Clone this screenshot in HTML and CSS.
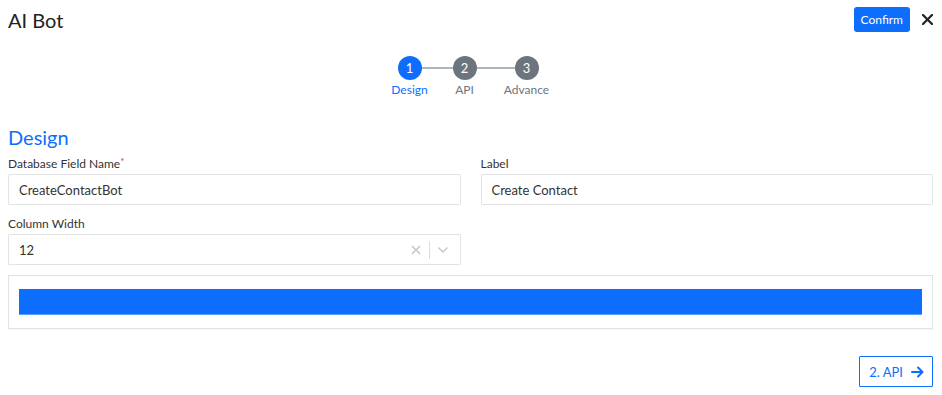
FILE: index.html
```html
<!DOCTYPE html>
<html lang="en">
<head>
<meta charset="UTF-8">
<meta name="viewport" content="width=device-width, initial-scale=1.0">
<title>AI Bot</title>
<link rel="stylesheet" href="styles.css">
</head>
<body>
<div class="modal">
  <!-- Header -->
  <div class="modal-header">
    <h2 class="modal-title">AI Bot</h2>
    <div class="header-actions">
      <button class="btn-confirm">Confirm</button>
      <button class="btn-close" aria-label="Close">
        <svg width="11" height="11" viewBox="0 0 11 11"><path d="M1 1L10 10M10 1L1 10" stroke="#222" stroke-width="2.2" stroke-linecap="round"/></svg>
      </button>
    </div>
  </div>

  <!-- Stepper -->
  <div class="stepper">
    <div class="step active">
      <div class="step-circle">1</div>
      <div class="step-label">Design</div>
    </div>
    <div class="step-line short"></div>
    <div class="step">
      <div class="step-circle">2</div>
      <div class="step-label">API</div>
    </div>
    <div class="step-line long"></div>
    <div class="step">
      <div class="step-circle">3</div>
      <div class="step-label">Advance</div>
    </div>
  </div>

  <!-- Design Section -->
  <h3 class="section-title">Design</h3>
  <div class="form-grid">
    <div class="field">
      <label class="field-label">Database Field Name<span class="required">*</span></label>
      <input class="text-input" type="text" value="CreateContactBot">
    </div>
    <div class="field">
      <label class="field-label">Label</label>
      <input class="text-input" type="text" value="Create Contact">
    </div>
    <div class="field">
      <label class="field-label">Column Width</label>
      <div class="select">
        <span class="select-value">12</span>
        <span class="select-clear">
          <svg width="10" height="10" viewBox="0 0 10 10"><path d="M1 1L9 9M9 1L1 9" stroke="#c4c4c4" stroke-width="1.5"/></svg>
        </span>
        <span class="select-sep"></span>
        <span class="select-arrow">
          <svg width="12" height="8" viewBox="0 0 12 8"><path d="M1.5 1.5L6 6L10.5 1.5" fill="none" stroke="#c4c4c4" stroke-width="1.3"/></svg>
        </span>
      </div>
    </div>
  </div>

  <div class="preview-box">
    <div class="preview-bar"></div>
  </div>

  <div class="modal-footer">
    <button class="btn-next">2. API
      <svg width="13" height="12" viewBox="0 0 13 12"><path d="M1 6H11M7 1.5L11.5 6L7 10.5" fill="none" stroke="#0d6efd" stroke-width="2" stroke-linecap="round" stroke-linejoin="round"/></svg>
    </button>
  </div>
</div>
</body>
</html>
```

FILE: styles.css
```css
body {
    font-family: 'Lato', 'Liberation Sans', sans-serif;
    margin: 0;
    padding: 0;
    background-color: #ffffff;
    color: #333333;
}

.modal {
    padding: 0 9px 0 8px;
}

/* Header */
.modal-header {
    height: 39px;
    display: flex;
    align-items: center;
    justify-content: space-between;
}

.modal-title {
    margin: 0;
    font-size: 20px;
    line-height: 24px;
    font-weight: 400;
    color: #222222;
}

.header-actions {
    display: flex;
    align-items: center;
}

.btn-confirm {
    height: 25px;
    padding: 0 7px;
    border: none;
    border-radius: 3px;
    background-color: #0d6efd;
    color: #ffffff;
    font-family: inherit;
    font-size: 12px;
    cursor: pointer;
}

.btn-close {
    margin-left: 12px;
    padding: 0;
    border: none;
    background: none;
    display: flex;
    align-items: center;
    cursor: pointer;
}

/* Stepper */
.stepper {
    display: flex;
    justify-content: center;
    align-items: flex-start;
    margin-top: 17px;
    padding-right: 5px;
}

.step {
    width: 24px;
    display: flex;
    flex-direction: column;
    align-items: center;
}

.step-circle {
    width: 24px;
    height: 24px;
    border-radius: 50%;
    background-color: #6c757d;
    color: #ffffff;
    font-size: 13px;
    line-height: 24px;
    text-align: center;
}

.step-label {
    margin-top: 3px;
    font-size: 12px;
    line-height: 14px;
    color: #6c757d;
    white-space: nowrap;
}

.step.active .step-circle {
    background-color: #0d6efd;
}

.step.active .step-label {
    color: #0d6efd;
}

.step-line {
    height: 2px;
    margin-top: 11px;
    background-color: #adb5bd;
}

.step-line.short {
    width: 31px;
}

.step-line.long {
    width: 38px;
}

/* Form */
.section-title {
    margin: 28px 0 8px;
    font-size: 20px;
    line-height: 24px;
    font-weight: 400;
    color: #0d6efd;
}

.form-grid {
    display: grid;
    grid-template-columns: 1fr 1fr;
    column-gap: 20px;
    row-gap: 12px;
}

.field-label {
    display: block;
    margin-bottom: 3px;
    font-size: 12px;
    line-height: 14px;
    color: #333333;
}

.required {
    color: #e53935;
    font-size: 10px;
    vertical-align: top;
    position: relative;
    top: -3px;
}

.text-input {
    box-sizing: border-box;
    width: 100%;
    height: 31px;
    padding: 0 10px;
    border: 1px solid #e3e3e3;
    border-radius: 1px;
    font-family: inherit;
    font-size: 13px;
    color: #333333;
    outline: none;
}

.select {
    box-sizing: border-box;
    height: 31px;
    display: flex;
    align-items: center;
    padding-left: 10px;
    border: 1px solid #e3e3e3;
    border-radius: 1px;
    font-size: 13px;
}

.select-value {
    flex: 1;
}

.select-clear {
    display: flex;
    padding: 0 8px;
}

.select-sep {
    width: 1px;
    height: 18px;
    background-color: #dcdcdc;
}

.select-arrow {
    display: flex;
    padding: 0 11px 0 7px;
}

/* Preview */
.preview-box {
    margin-top: 10px;
    padding: 13px 10px;
    border: 1px solid #e3e3e3;
    box-shadow: 0 1px 1px rgba(0, 0, 0, 0.04);
}

.preview-bar {
    height: 25px;
    background-color: #0d6efd;
    border-bottom: 1px solid #5aa0ff;
}

/* Footer */
.modal-footer {
    display: flex;
    justify-content: flex-end;
    margin-top: 27px;
}

.btn-next {
    height: 31px;
    padding: 0 8px 0 9px;
    display: flex;
    align-items: center;
    gap: 8px;
    border: 1px solid #0d6efd;
    border-radius: 1px;
    background-color: #ffffff;
    color: #0d6efd;
    font-family: inherit;
    font-size: 13px;
    cursor: pointer;
}
```
